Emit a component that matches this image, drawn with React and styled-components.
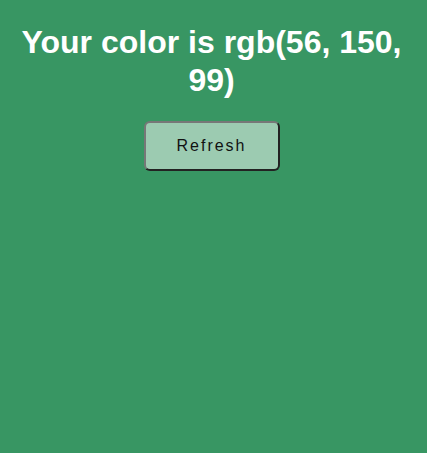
import React, { useState } from 'react';
import styled, { createGlobalStyle } from 'styled-components';

const GlobalStyle = createGlobalStyle`
  html {
    background-color: rgb(56, 150, 99);
    min-height: 100%;
  }
  body {
    margin: 0 10px 0 6px;
    font-family: "Liberation Sans", Arial, sans-serif;
  }
`;

const Styled = {
  Wrapper: styled.div`
    display: flex;
    flex-direction: column;
    align-items: center;
    text-align: center;
    h1 {
      color: white;
      font-size: 32px;
      line-height: 38px;
      font-weight: bold;
      margin: 23px 0 21px;
    }
  `,
  Button: styled.button`
    margin-top: 1px;
    width: 136px;
    height: 50px;
    padding: 0;
    font-family: "Liberation Sans", Arial, sans-serif;
    font-size: 16px;
    letter-spacing: 2px;
    color: #111;
    background-color: rgba(255, 255, 255, 0.5);
    border: 2px solid;
    border-color: #777 #222 #222 #777;
    border-radius: 6px;
    cursor: pointer;
  `,
};

const App = () => {
  const [color] = useState('rgb(56, 150, 99)');
  return (
    <>
      <GlobalStyle />
      <Styled.Wrapper>
        <h1>Your color is {color}</h1>
        <Styled.Button>Refresh</Styled.Button>
      </Styled.Wrapper>
    </>
  );
};

export default App;
